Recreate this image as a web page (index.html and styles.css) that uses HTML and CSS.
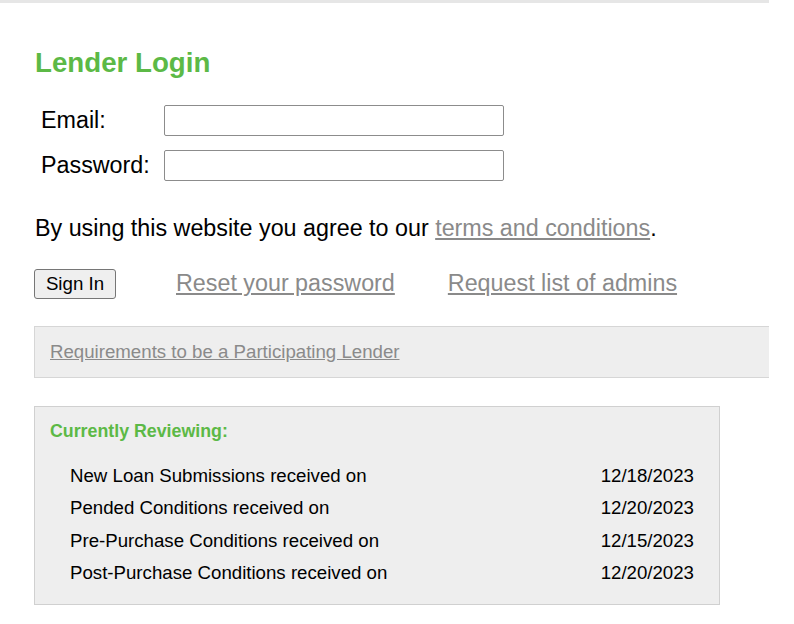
FILE: index.html
```html
<!DOCTYPE html>
<html lang="en">
<head>
<meta charset="utf-8">
<title>Lender Login</title>
<link rel="stylesheet" href="styles.css">
</head>
<body>
<div class="topbar"></div>
<main class="page">
  <h1 class="title">Lender Login</h1>
  <form class="login-form">
    <label class="field-label" for="email">Email:</label>
    <input class="field-input" id="email" type="text">
    <label class="field-label" for="password">Password:</label>
    <input class="field-input" id="password" type="password">
  </form>
  <p class="agree">By using this website you agree to our <a class="link" href="#">terms and conditions</a>.</p>
  <div class="actions">
    <button class="btn" type="button">Sign In</button>
    <a class="link action-link" href="#">Reset your password</a>
    <a class="link action-link" href="#">Request list of admins</a>
  </div>
  <div class="req-box">
    <a class="link small-link" href="#">Requirements to be a Participating Lender</a>
  </div>
  <section class="review-box">
    <h2 class="review-title">Currently Reviewing:</h2>
    <div class="review-list">
      <div class="review-row"><span>New Loan Submissions received on</span><span>12/18/2023</span></div>
      <div class="review-row"><span>Pended Conditions received on</span><span>12/20/2023</span></div>
      <div class="review-row"><span>Pre-Purchase Conditions received on</span><span>12/15/2023</span></div>
      <div class="review-row"><span>Post-Purchase Conditions received on</span><span>12/20/2023</span></div>
    </div>
  </section>
</main>
</body>
</html>
```
FILE: styles.css
```css
* { box-sizing: border-box; }
html, body {
  margin: 0;
  padding: 0;
  background: #ffffff;
  font-family: "Liberation Sans", Arial, sans-serif;
  color: #000;
}
.topbar {
  width: 769px;
  height: 3px;
  background: #e6e6e6;
}
.page {
  padding-left: 34px;
}
.title {
  margin: 44px 0 0 1px;
  font-size: 27.7px;
  line-height: 32px;
  font-weight: bold;
  color: #5cb946;
}
.login-form {
  margin-top: 26px;
  display: grid;
  grid-template-columns: 130px 340px;
  row-gap: 14px;
  align-items: center;
}
.field-label {
  padding-left: 7px;
  font-size: 23.3px;
  line-height: 27px;
}
.field-input {
  height: 31px;
  width: 340px;
  margin: 0;
  border: 1px solid #8c8c8c;
  border-radius: 2px;
  background: #fff;
  padding: 0 4px;
  font: inherit;
}
.agree {
  margin: 34px 0 0 1px;
  font-size: 23.3px;
  line-height: 27px;
}
.link {
  color: #8a8a8a;
  text-decoration: underline;
}
.actions {
  margin-top: 27px;
  display: flex;
  align-items: center;
  height: 30px;
}
.btn {
  width: 82px;
  height: 30px;
  margin: 0;
  padding: 0;
  border: 1px solid #767676;
  border-radius: 3px;
  background: #efefef;
  font-family: "Liberation Sans", Arial, sans-serif;
  font-size: 18.7px;
  color: #000;
}
.action-link {
  font-size: 23.3px;
  line-height: 26px;
  margin-left: 60px;
  margin-top: -2px;
}
.action-link + .action-link {
  margin-left: 53px;
}
.req-box {
  margin-top: 27px;
  width: 735px;
  height: 52px;
  background: #eeeeee;
  border: 1px solid #d6d6d6;
  border-right: none;
  display: flex;
  align-items: center;
  padding-left: 15px;
}
.small-link {
  font-size: 18.67px;
  line-height: 22px;
}
.review-box {
  margin-top: 28px;
  width: 686px;
  height: 199px;
  background: #eeeeee;
  border: 1px solid #d0d0d0;
  padding: 13px 25px 0 15px;
}
.review-title {
  margin: 0;
  font-size: 17.8px;
  line-height: 22px;
  font-weight: bold;
  color: #5cb946;
}
.review-list {
  margin-top: 18px;
  padding-left: 20px;
  display: flex;
  flex-direction: column;
}
.review-row {
  display: flex;
  justify-content: space-between;
  font-size: 18.67px;
  line-height: 32.4px;
}
```
